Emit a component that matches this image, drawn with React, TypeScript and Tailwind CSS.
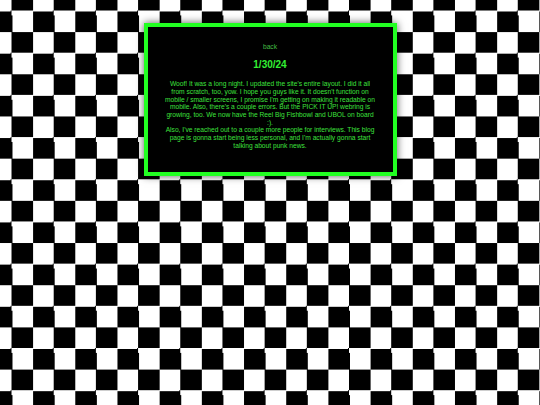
export default function App() {
  return (
    <div className="min-h-screen w-full overflow-hidden bg-[conic-gradient(#000_0_25%,#fff_0_50%,#000_0_75%,#fff_0)] bg-[length:42.2px_42.2px] bg-[position:-9.1px_-10.1px] pt-[23px] font-['Liberation_Sans',Arial,sans-serif]">
      <div className="mx-auto h-[153px] w-[253px] border-4 border-[#22ff22] bg-black px-4 pt-4 text-center shadow-[0_0_8px_rgba(0,0,0,0.65)]">
        <a href="#" className="block text-[6.67px] leading-[7.6px] text-[#44bb44]">
          back
        </a>
        <h1 className="mt-2 text-[10px] font-bold leading-[11.5px] text-[#33f033]">1/30/24</h1>
        <p className="mt-[10px] text-[6.67px] leading-[7.7px] text-[#3ee03e]">
          Woof! It was a long night. I updated the site's entire layout. I did it all from scratch, too, yow. I
          hope you guys like it. It doesn't function on mobile / smaller screens, I promise I'm getting on
          making it readable on mobile. Also, there's a couple errors. But the PICK IT UP! webring is growing,
          too. We now have the Reel Big Fishbowl and UBOL on board :).
          <br />
          Also, I've reached out to a couple more people for interviews. This blog page is gonna start being
          less personal, and I'm actually gonna start talking about punk news.
        </p>
      </div>
    </div>
  );
}
